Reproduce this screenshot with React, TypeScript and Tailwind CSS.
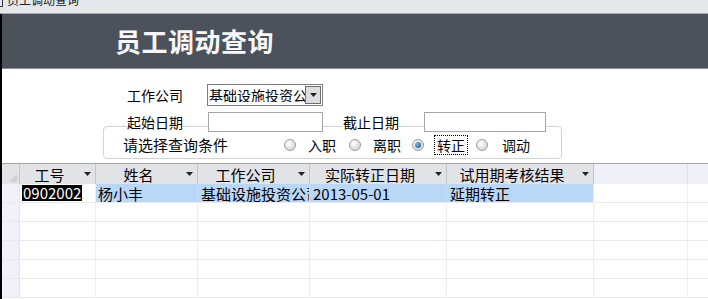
const cjk = "font-['Noto_Sans_CJK_SC','Liberation_Sans',sans-serif]";

const columns = [
  { label: '工号', w: 'w-[76px]' },
  { label: '姓名', w: 'w-[102px]' },
  { label: '工作公司', w: 'w-[112px]' },
  { label: '实际转正日期', w: 'w-[137px]' },
  { label: '试用期考核结果', w: 'w-[147px]' },
];

function Radio({ checked }: { checked?: boolean }) {
  return (
    <span className="w-[12px] h-[12px] rounded-full border border-[#9a9b9c] bg-[radial-gradient(circle_at_35%_35%,#ffffff,#c9cacb)] flex items-center justify-center shrink-0">
      {checked && <span className="w-[6px] h-[6px] rounded-full bg-[radial-gradient(circle_at_35%_35%,#7fb6e0,#14507e)]" />}
    </span>
  );
}

function DownArrow() {
  return (
    <svg width="7" height="4" viewBox="0 0 7 4" className="shrink-0">
      <path d="M0 0h7L3.5 4z" fill="#222" />
    </svg>
  );
}

function EmptyRow() {
  return (
    <div className="flex h-[19px] border-b border-[#e8e8ee]">
      <div className="w-[18px] bg-[#f1f1fa] border-r border-[#e4e4ec]" />
      {columns.map((c) => (
        <div key={c.label} className={`${c.w} border-r border-[#ececf0]`} />
      ))}
      <div className="w-[94px] border-r border-[#ececf0]" />
      <div className="flex-1" />
    </div>
  );
}

export default function App() {
  return (
    <div className={`w-[708px] h-[299px] overflow-hidden bg-white text-black ${cjk}`}>
      {/* window title strip */}
      <div className="h-[14px] bg-[#e6e7eb] border-b border-[#a4a8b1] overflow-hidden flex items-start">
        <span className="w-[3px] h-[7px] border-r border-b border-[#333] mt-0 shrink-0" />
        <span className="ml-[4px] -mt-[8px] text-[12px] leading-[16px] text-[#222]">员工调动查询</span>
      </div>

      <div className="border-l-2 border-black h-full">
        {/* banner */}
        <div className="h-[55px] bg-[#4b525c] border-b border-[#8c8f94] flex items-center pl-[113px]">
          <h1 className="text-[26px] font-bold text-[#f7f7f7] tracking-[0.5px] leading-none -mt-[1px]">员工调动查询</h1>
        </div>

        {/* query form */}
        <div className="mt-[15px] flex items-center h-[22px] pl-[125px] text-[14px]">
          <span className="w-[80px]">工作公司</span>
          <div className="w-[116px] h-[22px] border border-[#7f7f7f] flex items-center overflow-hidden">
            <span className="flex-1 overflow-hidden whitespace-nowrap pl-[1px] leading-none">基础设施投资公司</span>
            <span className="w-[16px] h-[18px] mr-[1px] bg-[#dedede] border border-[#6f6f6f] flex items-center justify-center shrink-0">
              <DownArrow />
            </span>
          </div>
        </div>

        <div className="relative z-10 mt-[6px] flex items-center h-[20px] pl-[125px] text-[14px]">
          <span className="bg-white leading-none">起始日期</span>
          <div className="ml-[25px] w-[115px] h-[20px] border border-[#a5a5a5] bg-white" />
          <span className="ml-[20px] bg-white leading-none">截止日期</span>
          <div className="ml-[25px] w-[122px] h-[20px] border border-[#a5a5a5] bg-white" />
        </div>

        <div className="-mt-[6px] ml-[101px] w-[459px] h-[33px] rounded-[4px] border border-[#d3d3d3] flex items-center pl-[19px] pt-[4px] text-[14px]">
          <span className="w-[161px] text-[15px] leading-none">请选择查询条件</span>
          <Radio />
          <span className="ml-[12px] leading-none">入职</span>
          <span className="ml-[13px]"><Radio /></span>
          <span className="ml-[12px] leading-none">离职</span>
          <span className="ml-[11px]"><Radio checked /></span>
          <span className="ml-[10px] px-[2px] h-[20px] flex items-center border border-dotted border-black leading-none">转正</span>
          <span className="ml-[8px]"><Radio /></span>
          <span className="ml-[14px] leading-none">调动</span>
        </div>

        {/* datasheet */}
        <div className="mt-[4px] text-[15px]">
          <div className="flex h-[21px] border-t border-[#a3a3a6]">
            <div className="w-[18px] bg-[#e2e3e7] border-r border-[#c4c5c9] flex items-end justify-end p-[2px]">
              <svg width="8" height="8" viewBox="0 0 8 8">
                <path d="M8 0V8H0z" fill="#cfd1d6" />
              </svg>
            </div>
            {columns.map((c) => (
              <div key={c.label} className={`${c.w} bg-[#e2e3e7] border-r border-[#c4c5c9] flex items-center`}>
                <span className="flex-1 text-center leading-none whitespace-nowrap">{c.label}</span>
                <span className="w-[16px] flex justify-center"><DownArrow /></span>
              </div>
            ))}
            <div className="w-[94px] bg-[#f0f1f8] border-r border-[#e2e3ea]" />
            <div className="flex-1 bg-[#f0f1f8]" />
          </div>

          <div className="flex h-[19px] border-b border-[#e8e8ee] whitespace-nowrap">
            <div className="w-[18px] bg-[#f1f1fa] border-r border-[#e4e4ec]" />
            <div className="w-[76px] bg-white border-r border-[#ececf0] flex items-center pl-[2px]">
              <span className="bg-black text-white px-[1px] leading-[16px]">0902002</span>
            </div>
            <div className="w-[102px] bg-[#b9d8f8] border-r border-[#c8ddf2] flex items-center pl-[2px] leading-none">杨小丰</div>
            <div className="w-[112px] bg-[#b9d8f8] border-r border-[#c8ddf2] flex items-center pl-[3px] leading-none overflow-hidden">基础设施投资公司</div>
            <div className="w-[137px] bg-[#b9d8f8] border-r border-[#c8ddf2] flex items-center pl-[3px] leading-none">2013-05-01</div>
            <div className="w-[147px] bg-[#b9d8f8] border-r border-[#ececf0] flex items-center pl-[3px] leading-none">延期转正</div>
            <div className="w-[94px] border-r border-[#ececf0]" />
            <div className="flex-1" />
          </div>

          <EmptyRow />
          <EmptyRow />
          <EmptyRow />
          <EmptyRow />
          <EmptyRow />
        </div>
      </div>
    </div>
  );
}
